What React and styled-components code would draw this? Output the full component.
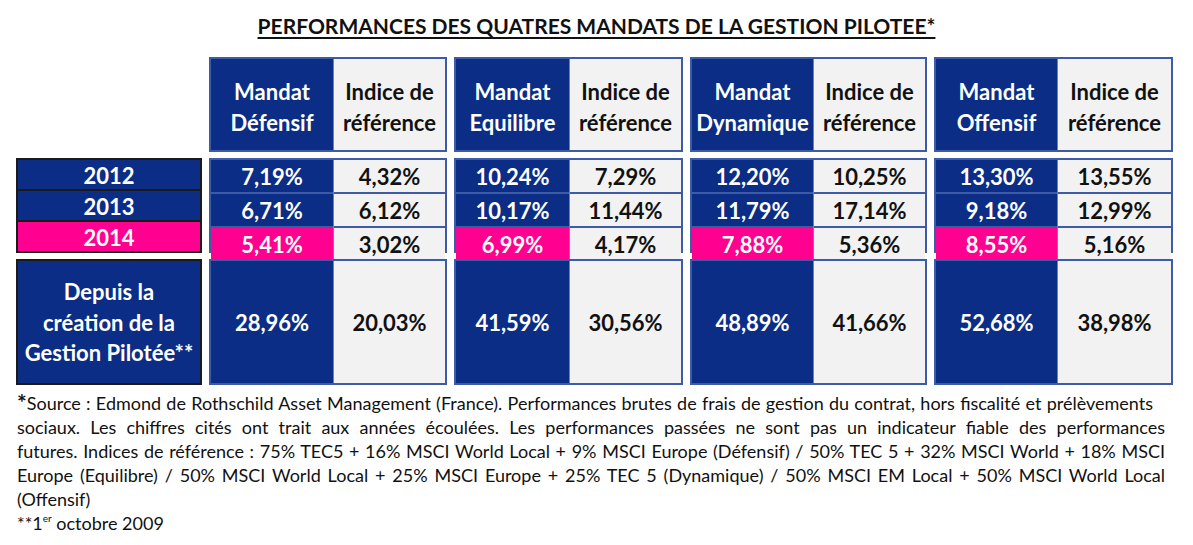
import React from "react";
import styled, { createGlobalStyle } from "styled-components";

const BLUE = "#0b2d86";
const PINK = "#ff0090";
const GREY = "#f2f2f2";
const EDGE = "#3d5ba7";
const INK = "#111111";

const GlobalStyle = createGlobalStyle`
  html, body { margin: 0; padding: 0; background: #ffffff; }
  body { font-family: "Lato", "Liberation Sans", sans-serif; color: ${INK}; }
`;

const Page = styled.div`
  width: 1193px;
  height: 545px;
  overflow: hidden;
  background: #ffffff;
`;

const Title = styled.h1`
  margin: 0;
  padding-top: 14px;
  height: 24px;
  line-height: 24px;
  text-align: center;
  font-size: 21px;
  font-weight: 700;
  text-decoration: underline;
  text-underline-offset: 3px;
  text-decoration-thickness: 2px;
  color: ${INK};
`;

const Table = styled.div`
  display: grid;
  grid-template-columns: 186px 238px 229px 237px 239px;
  grid-template-rows: 95px 95px 126px;
  column-gap: 7px;
  row-gap: 6px;
  margin: 19px 0 0 16px;
`;

const Spacer = styled.div``;

const Group = styled.div`
  display: grid;
  grid-template-columns: ${(p) => p.$blue}px 1fr;
  border: 2px solid ${EDGE};
  background: ${GREY};
  box-sizing: border-box;
`;

const Col = styled.div`
  display: flex;
  flex-direction: column;
  background: ${(p) => (p.$dark ? BLUE : GREY)};
  border-left: ${(p) => (p.$dark ? "none" : "1px solid #6a80bb")};
`;

const Cell = styled.div`
  flex: 1;
  display: flex;
  align-items: center;
  justify-content: center;
  text-align: center;
  font-weight: 700;
  font-size: 22px;
  line-height: 31px;
  padding-top: ${(p) => (p.$head ? 4 : 1)}px;
  color: ${(p) => (p.$tone === "grey" ? INK : "#ffffff")};
  background: ${(p) =>
    p.$tone === "pink" ? PINK : p.$tone === "grey" ? GREY : BLUE};
  & + & {
    border-top: 2px solid ${(p) => (p.$tone === "grey" ? EDGE : BLUE)};
  }
`;

const LeftBox = styled.div`
  display: flex;
  flex-direction: column;
  border: 2px solid #1a1a1a;
  background: ${BLUE};
  box-sizing: border-box;
`;

const YearCell = styled.div`
  flex: 1;
  display: flex;
  align-items: center;
  justify-content: center;
  font-weight: 700;
  font-size: 22px;
  padding-top: 1px;
  color: #ffffff;
  background: ${(p) => (p.$hot ? PINK : BLUE)};
  & + & {
    border-top: 2px solid #1a1a1a;
  }
`;

const SinceText = styled.div`
  flex: 1;
  display: flex;
  align-items: center;
  justify-content: center;
  text-align: center;
  font-weight: 700;
  font-size: 22px;
  line-height: 30.5px;
  color: #ffffff;
  padding-top: 2px;
`;

const Notes = styled.div`
  margin: 6px 28px 0 17px;
  font-size: 18px;
  line-height: 24px;
  color: ${INK};
`;

const Line = styled.div`
  white-space: nowrap;
  text-align: ${(p) => (p.$last ? "left" : "justify")};
  text-align-last: ${(p) => (p.$last ? "left" : "justify")};
  margin-right: ${(p) => p.$inset || 0}px;
`;

const Star = styled.span`
  font-size: 23px;
  font-weight: 700;
  vertical-align: -1px;
  line-height: 0;
`;

const Sup = styled.sup`
  font-size: 10px;
  vertical-align: 8px;
  line-height: 0;
`;

const groups = [
  {
    blue: 122,
    name: "Défensif",
    years: ["7,19%", "6,71%", "5,41%"],
    refs: ["4,32%", "6,12%", "3,02%"],
    since: "28,96%",
    sinceRef: "20,03%",
  },
  {
    blue: 113,
    name: "Equilibre",
    years: ["10,24%", "10,17%", "6,99%"],
    refs: ["7,29%", "11,44%", "4,17%"],
    since: "41,59%",
    sinceRef: "30,56%",
  },
  {
    blue: 121,
    name: "Dynamique",
    years: ["12,20%", "11,79%", "7,88%"],
    refs: ["10,25%", "17,14%", "5,36%"],
    since: "48,89%",
    sinceRef: "41,66%",
  },
  {
    blue: 121,
    name: "Offensif",
    years: ["13,30%", "9,18%", "8,55%"],
    refs: ["13,55%", "12,99%", "5,16%"],
    since: "52,68%",
    sinceRef: "38,98%",
  },
];

const years = ["2012", "2013", "2014"];

export default function App() {
  return (
    <Page>
      <GlobalStyle />
      <Title>PERFORMANCES DES QUATRES MANDATS DE LA GESTION PILOTEE*</Title>
      <Table>
        <Spacer />
        {groups.map((g) => (
          <Group key={"h" + g.name} $blue={g.blue}>
            <Col $dark>
              <Cell $tone="blue" $head>
                Mandat
                <br />
                {g.name}
              </Cell>
            </Col>
            <Col>
              <Cell $tone="grey" $head>
                Indice de
                <br />
                référence
              </Cell>
            </Col>
          </Group>
        ))}

        <LeftBox>
          {years.map((y, i) => (
            <YearCell key={y} $hot={i === 2}>
              {y}
            </YearCell>
          ))}
        </LeftBox>
        {groups.map((g) => (
          <Group key={"d" + g.name} $blue={g.blue}>
            <Col $dark>
              {g.years.map((v, i) => (
                <Cell key={i} $tone={i === 2 ? "pink" : "blue"}>
                  {v}
                </Cell>
              ))}
            </Col>
            <Col>
              {g.refs.map((v, i) => (
                <Cell key={i} $tone="grey">
                  {v}
                </Cell>
              ))}
            </Col>
          </Group>
        ))}

        <LeftBox>
          <SinceText>
            Depuis la
            <br />
            création de la
            <br />
            Gestion Pilotée**
          </SinceText>
        </LeftBox>
        {groups.map((g) => (
          <Group key={"s" + g.name} $blue={g.blue}>
            <Col $dark>
              <Cell $tone="blue">{g.since}</Cell>
            </Col>
            <Col>
              <Cell $tone="grey">{g.sinceRef}</Cell>
            </Col>
          </Group>
        ))}
      </Table>

      <Notes>
        <Line $inset={12}>
          <Star>*</Star>Source : Edmond de Rothschild Asset Management (France).
          Performances brutes de frais de gestion du contrat, hors fiscalité et
          prélèvements
        </Line>
        <Line>
          sociaux. Les chiffres cités ont trait aux années écoulées. Les
          performances passées ne sont pas un indicateur fiable des performances
        </Line>
        <Line>
          futures. Indices de référence : 75% TEC5 + 16% MSCI World Local + 9%
          MSCI Europe (Défensif) / 50% TEC 5 + 32% MSCI World + 18% MSCI
        </Line>
        <Line>
          Europe (Equilibre) / 50% MSCI World Local + 25% MSCI Europe + 25% TEC 5
          (Dynamique) / 50% MSCI EM Local + 50% MSCI World Local
        </Line>
        <Line $last>(Offensif)</Line>
        <Line $last>
          **1<Sup>er</Sup> octobre 2009
        </Line>
      </Notes>
    </Page>
  );
}
